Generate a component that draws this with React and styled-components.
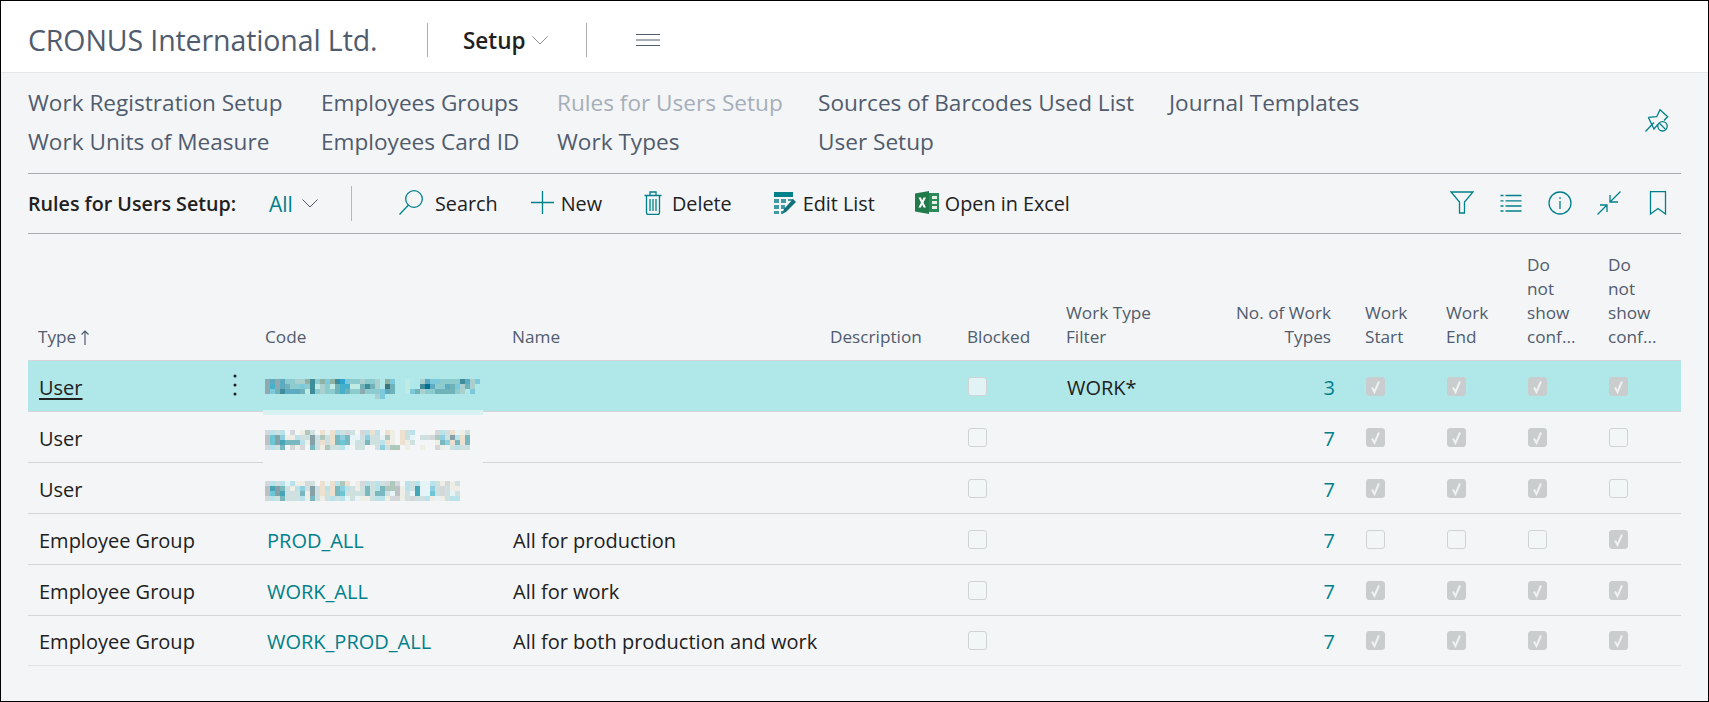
import React from 'react'
import styled, { createGlobalStyle } from 'styled-components'

const TEAL = '#00808a'
const SLATE = '#505c6d'
const INK = '#212121'

const GlobalStyle = createGlobalStyle`
  html, body {
    margin: 0;
    padding: 0;
    background: #f4f5f7;
    font-family: "Open Sans", "Noto Sans", sans-serif;
  }
  * { box-sizing: border-box; }
`

const Page = styled.div`
  width: 1709px;
  height: 702px;
  border: 1px solid #000;
  background: #f4f5f7;
  overflow: hidden;
`

const Header = styled.header`
  height: 72px;
  background: #fff;
  border-bottom: 1px solid #e6e7e9;
  display: flex;
  align-items: center;
  padding: 7px 0 0 27px;
`

const Title = styled.div`
  font-size: 28.5px;
  color: ${SLATE};
  width: 399px;
  letter-spacing: -0.1px;
`

const Divider = styled.span`
  width: 1px;
  height: 34px;
  background: #a9adb3;
`

const AreaMenu = styled.div`
  width: 158px;
  padding-left: 35px;
  display: flex;
  align-items: center;
  gap: 6px;
  font-size: 22.5px;
  font-weight: 600;
  color: ${INK};
`

const MenuIcon = styled.svg`
  margin-left: 49px;
  display: block;
`

const Body = styled.main`
  padding: 0 27px;
`

const Nav = styled.nav`
  height: 101px;
  border-bottom: 1px solid #a7aaaf;
  display: flex;
  justify-content: space-between;
  padding: 10px 12px 0 0;
`

const NavLinks = styled.div`
  display: grid;
  grid-template-columns: 293px 236px 261px 351px auto;
  grid-auto-rows: 39px;
`

const NavLink = styled.a`
  font-size: 22.6px;
  line-height: 39px;
  white-space: nowrap;
  color: ${p => (p.$muted ? '#a6aeb9' : SLATE)};
`

const PinIcon = styled.svg`
  margin-top: 26px;
  display: block;
`

const Toolbar = styled.div`
  height: 60px;
  border-bottom: 1px solid #a7aaaf;
  display: flex;
  align-items: center;
  padding-right: 11px;
`

const ListName = styled.div`
  width: 241px;
  font-size: 19.7px;
  font-weight: 600;
  color: ${INK};
  white-space: nowrap;
`

const ViewPicker = styled.div`
  width: 82px;
  display: flex;
  align-items: center;
  gap: 9px;
  font-size: 21px;
  color: ${TEAL};
`

const ToolDivider = styled.span`
  width: 1px;
  height: 35px;
  background: #b4b7bc;
`

const ToolButton = styled.button`
  margin-left: ${p => p.$before}px;
  padding: 0;
  border: 0;
  background: none;
  display: flex;
  align-items: center;
  gap: ${p => p.$gap}px;
  font: inherit;
  font-size: 19.8px;
  color: ${INK};
  white-space: nowrap;
`

const ToolIcon = styled.svg`
  display: block;
  flex: none;
  position: relative;
  top: -1px;
`

const ActionIcons = styled.div`
  margin-left: auto;
  display: flex;
  align-items: center;
  gap: 25px;
  margin-top: -2px;
`

const COLUMNS = '228px 247px 318px 137px 99px 133px 166px 81px 81px 81px 82px'

const TableHead = styled.div`
  height: 127px;
  display: grid;
  grid-template-columns: ${COLUMNS};
  align-items: end;
  padding-bottom: 11px;
  border-bottom: 1px solid #d3d5d9;
`

const HeadCell = styled.div`
  font-size: 17.2px;
  line-height: 24px;
  color: ${SLATE};
  padding: 0 ${p => (p.$right ? '25px' : '0')} 0 ${p => (p.$sorted ? '10px' : '9px')};
  text-align: ${p => (p.$right ? 'right' : 'left')};
  white-space: nowrap;
  display: ${p => (p.$sorted ? 'flex' : 'block')};
  align-items: center;
  gap: 5px;
`

const Row = styled.div`
  height: 51px;
  display: grid;
  grid-template-columns: ${COLUMNS};
  align-items: center;
  background: ${p => (p.$selected ? '#b0e7e9' : 'transparent')};
  border-bottom: 1px solid #d3d5d9;
  &:last-child {
    height: 50px;
    border-bottom-color: #e2e3e6;
  }
`

const Cell = styled.div`
  position: relative;
  height: 100%;
  display: flex;
  align-items: center;
  padding: 2px 0 0 ${p => p.$pad || 10}px;
  font-size: 20px;
  color: ${INK};
  white-space: nowrap;
`

const TypeCell = styled(Cell)`
  justify-content: space-between;
  padding-right: 19px;
`

const TypeText = styled.span`
  text-decoration: ${p => (p.$current ? 'underline' : 'none')};
  text-underline-offset: 3px;
`

const CodeLink = styled.a`
  color: ${TEAL};
`

const CodeCell = styled(Cell)`
  /* repainted strip below the blurred code in the screenshot */
  &::after {
    content: ${p => (p.$patch ? '""' : 'none')};
    position: absolute;
    left: 7px;
    bottom: ${p => (p.$patch === 'light' ? '-4px' : '-1px')};
    width: 220px;
    height: ${p => (p.$patch === 'light' ? '5px' : '2px')};
    background: ${p => (p.$patch === 'light' ? '#d8f1f3' : '#f4f5f7')};
  }
`

const Mosaic = styled.svg`
  display: block;
  margin: 4px 0 0 -2px;
`

const NumberCell = styled(Cell)`
  justify-content: flex-end;
  padding-right: 21px;
  color: ${TEAL};
`

const CheckCell = styled.div`
  height: 100%;
  display: flex;
  align-items: center;
  padding-left: 10px;
`

const Box = styled.span`
  width: 19px;
  height: 19px;
  border-radius: 3px;
  display: block;
  background: ${p => (p.$checked ? '#c9cdcd' : p.$selected ? '#e1f3f5' : '#f3f6f6')};
  border: 1px solid ${p => (p.$checked ? '#c9cdcd' : '#d0d3d4')};
  svg { display: block; }
`

const line = { fill: 'none', stroke: TEAL, strokeWidth: 1.3 }

const Chevron = ({ color }) => (
  <svg width="16" height="9" viewBox="0 0 16 9" style={{ display: 'block' }}>
    <path d="M0.5 0.5L8 8L15.5 0.5" fill="none" stroke={color} strokeWidth="1" />
  </svg>
)

const SearchIcon = () => (
  <ToolIcon width="24" height="25" viewBox="0 0 24 25" {...line}>
    <circle cx="15" cy="9" r="8.3" />
    <path d="M9.5 15L0.5 24.5" />
  </ToolIcon>
)

const PlusIcon = () => (
  <ToolIcon width="23" height="23" viewBox="0 0 23 23" {...line}>
    <path d="M11.5 0V23M0 11.5H23" />
  </ToolIcon>
)

const TrashIcon = () => (
  <ToolIcon width="18" height="24" viewBox="0 0 18 24" {...line}>
    <path d="M0.5 4.5H17.5M2.5 4.5V21.5Q2.5 23.5 4.5 23.5H13.5Q15.5 23.5 15.5 21.5V4.5M6 4.5V1H12V4.5M6 8V20M9 8V20M12 8V20" />
  </ToolIcon>
)

const EditListIcon = () => (
  <ToolIcon width="22" height="22" viewBox="0 0 22 22">
    <path d="M0 0H19V5H0Z" fill={TEAL} />
    <path d="M0 7H5V11H0ZM7 7H12V11H7ZM14 7H19V9H14ZM0 13H5V17H0ZM7 13H11V17H7ZM0 19H5V22H0ZM7 19H9V22H7Z" fill="#3f9aa2" />
    <path d="M19 7L22 10L12 20L8 22L10 17Z" fill="#14707a" />
  </ToolIcon>
)

const ExcelIcon = () => (
  <ToolIcon width="24" height="23" viewBox="0 0 24 23">
    <path d="M0 2.5L14 0V23L0 20.5Z" fill="#217a49" />
    <path d="M14 2H24V21H14Z" fill="#2c8a57" />
    <path d="M17 5H22V8H17ZM17 10H22V13H17ZM17 15H22V18H17Z" fill="#e4f1e9" />
    <path d="M3.5 6.5L6 6.5L7.2 9.5L8.5 6.5L11 6.5L8.5 11.5L11 16.5L8.5 16.5L7.2 13.5L6 16.5L3.5 16.5L6 11.5Z" fill="#fff" />
  </ToolIcon>
)

const FilterIcon = () => (
  <svg width="24" height="23" viewBox="0 0 24 23" {...line} style={{ display: 'block' }}>
    <path d="M1 1H23L14.5 11V22H9.5V11Z" />
  </svg>
)

const ListIcon = () => (
  <svg width="24" height="18" viewBox="0 0 24 18" style={{ display: 'block' }} fill="none" stroke={TEAL} strokeWidth="1.3">
    <path d="M1.5 1.5H4.5M6.5 1.5H22.5M1.5 6.8H4.5M6.5 6.8H22.5M1.5 12H4.5M6.5 12H22.5M1.5 17H4.5M6.5 17H22.5" />
  </svg>
)

const InfoIcon = () => (
  <svg width="24" height="24" viewBox="0 0 24 24" {...line} style={{ display: 'block' }}>
    <circle cx="12" cy="12" r="11" />
    <path d="M12 10V18M12 6.2V8" />
  </svg>
)

const CompressIcon = () => (
  <svg width="24" height="24" viewBox="0 0 24 24" {...line} style={{ display: 'block' }}>
    <path d="M23.5 0.5L13 11M13 4V11H21M0.5 23.5L10 14M3 14H10V21" />
  </svg>
)

const BookmarkIcon = () => (
  <svg width="24" height="24" viewBox="0 0 24 24" {...line} style={{ display: 'block' }}>
    <path d="M4.5 0.7H19.5V23L12 17.5L4.5 23Z" />
  </svg>
)

const SortArrow = () => (
  <svg width="8" height="15" viewBox="0 0 8 15" style={{ display: 'block' }} fill="none" stroke={SLATE} strokeWidth="1.2">
    <path d="M4 15V1M0.5 4.5L4 1L7.5 4.5" />
  </svg>
)

const Dots = () => (
  <svg width="4" height="22" viewBox="0 0 4 22" style={{ display: 'block', marginTop: '-4px' }} fill="#1f1f1f">
    <circle cx="2" cy="2" r="1.5" />
    <circle cx="2" cy="11" r="1.5" />
    <circle cx="2" cy="20" r="1.5" />
  </svg>
)

const Check = () => (
  <svg width="17" height="17" viewBox="0 0 17 17">
    <path d="M5 9.5L7.5 14L12 3.5" fill="none" stroke="#f0f2f2" strokeWidth="2" />
  </svg>
)

// colour of each pixel of the blurred-out codes
const PIXELS = {
  A: '#8fa9b0', B: '#44b0cc', C: '#5cabc2', D: '#8ccbce', E: '#a9d0cf', F: '#3f8d9a', G: '#2aa5cf',
  H: '#c0ebe4', I: '#7cc9dc', J: '#3f7478', K: '#006f8f', L: '#8fb3a3', M: '#6fb2b8',
  a: '#d5d8db', b: '#bdc1c6', c: '#b9e2ea', d: '#6cc6d3', e: '#47a5b8', f: '#86a0a8', g: '#efeee6',
  h: '#ede0cf', i: '#cfe0e0', j: '#7ab8bf', k: '#e6f3f7', l: '#b0c8bc', m: '#8fcfe0',
}

const BLUR = [
  [
    'ACACDDEELFDLILFGIDDEDDE.LI..H..ECIIDDDDFCEI',
    'ABACMDDIDFHEDHMBBHHMFME.JM..H..FKCDDCMIEME.',
    'AIMFCCCMHFDEDDMBMDDADDDICM..HIMEDDMMMMDE.I.',
    '......................EI...................',
  ],
  [
    'acic.a.gli.hkhciai.achc.hg.hic....acihkgi',
    'bdfmggciifilihjmjkkimiiklg.hik.iialmifchj',
    'bdfejjjcgfihihjdjkiijiichg.hgi....gjmhjhj',
    'acij.aga.jigliick.ii..imill.g..g..agkicii',
  ],
  [
    'acickcggai.hkhclh.gaciciala.cickkcigagi',
    'befjigcmifihchjmcigijicjllbgciekkmiaigg',
    'bdfeiiijgfihihjdiiiijijjikbgikekkdiaiki',
    'acijiiicgjigicickikggiccgaagiaiicgkgicc',
  ],
]

const BlurredCode = ({ rows }) => (
  <Mosaic width="215" height="20" viewBox="0 0 215 20" shapeRendering="crispEdges">
    {rows.flatMap((pixels, y) =>
      pixels.split('').map((key, x) =>
        PIXELS[key] ? <rect key={`${x}-${y}`} x={x * 5} y={y * 5} width="5" height="5" fill={PIXELS[key]} /> : null
      )
    )}
  </Mosaic>
)

const links = [
  'Work Registration Setup', 'Employees Groups', 'Rules for Users Setup', 'Sources of Barcodes Used List', 'Journal Templates',
  'Work Units of Measure', 'Employees Card ID', 'Work Types', 'User Setup',
]

const rows = [
  { type: 'User', blur: 0, filter: 'WORK*', count: 3, checks: [0, 1, 1, 1, 1], patch: 'light' },
  { type: 'User', blur: 1, count: 7, checks: [0, 1, 1, 1, 0], patch: 'bg' },
  { type: 'User', blur: 2, count: 7, checks: [0, 1, 1, 1, 0] },
  { type: 'Employee Group', code: 'PROD_ALL', name: 'All for production', count: 7, checks: [0, 0, 0, 0, 1] },
  { type: 'Employee Group', code: 'WORK_ALL', name: 'All for work', count: 7, checks: [0, 1, 1, 1, 1] },
  { type: 'Employee Group', code: 'WORK_PROD_ALL', name: 'All for both production and work', count: 7, checks: [0, 1, 1, 1, 1] },
]

const App = () => {
  return (
    <Page>
      <GlobalStyle />
      <Header>
        <Title>CRONUS International Ltd.</Title>
        <Divider />
        <AreaMenu>
          Setup <Chevron color="#8a9099" />
        </AreaMenu>
        <Divider />
        <MenuIcon width="24" height="12" viewBox="0 0 24 12" fill="none" stroke={SLATE} strokeWidth="1">
          <path d="M0 0.5H24M0 6H24M0 11.5H24" />
        </MenuIcon>
      </Header>

      <Body>
        <Nav>
          <NavLinks>
            {links.map(label => (
              <NavLink key={label} $muted={label === 'Rules for Users Setup'}>{label}</NavLink>
            ))}
          </NavLinks>
          <PinIcon width="24" height="23" viewBox="0 0 24 23" {...line}>
            <path d="M0.5 22.5L9 13.5M3.3 8.3L11.7 7.7L15 0.7L22.7 7.7L19 11.5M13 15.2L9 20L3.3 8.3" />
            <circle cx="17.5" cy="17.3" r="4.7" />
            <path d="M14.2 14L20.8 20.6" />
          </PinIcon>
        </Nav>

        <Toolbar>
          <ListName>Rules for Users Setup:</ListName>
          <ViewPicker>
            All <Chevron color={SLATE} />
          </ViewPicker>
          <ToolDivider />
          <ToolButton $before={47} $gap={12}><SearchIcon />Search</ToolButton>
          <ToolButton $before={33} $gap={7}><PlusIcon />New</ToolButton>
          <ToolButton $before={42} $gap={10}><TrashIcon />Delete</ToolButton>
          <ToolButton $before={42} $gap={7}><EditListIcon />Edit List</ToolButton>
          <ToolButton $before={40} $gap={6}><ExcelIcon />Open in Excel</ToolButton>
          <ActionIcons>
            <FilterIcon />
            <ListIcon />
            <InfoIcon />
            <CompressIcon />
            <BookmarkIcon />
          </ActionIcons>
        </Toolbar>

        <TableHead>
          <HeadCell $sorted>Type <SortArrow /></HeadCell>
          <HeadCell>Code</HeadCell>
          <HeadCell>Name</HeadCell>
          <HeadCell>Description</HeadCell>
          <HeadCell>Blocked</HeadCell>
          <HeadCell>Work Type<br />Filter</HeadCell>
          <HeadCell $right>No. of Work<br />Types</HeadCell>
          <HeadCell>Work<br />Start</HeadCell>
          <HeadCell>Work<br />End</HeadCell>
          <HeadCell>Do<br />not<br />show<br />conf...</HeadCell>
          <HeadCell>Do<br />not<br />show<br />conf...</HeadCell>
        </TableHead>

        {rows.map((row, i) => (
          <Row key={i} $selected={i === 0}>
            <TypeCell $pad={11}>
              <TypeText $current={i === 0}>{row.type}</TypeText>
              {i === 0 && <Dots />}
            </TypeCell>
            <CodeCell $pad={11} $patch={row.patch}>
              {row.code ? <CodeLink>{row.code}</CodeLink> : <BlurredCode rows={BLUR[row.blur]} />}
            </CodeCell>
            <Cell>{row.name}</Cell>
            <Cell />
            <CheckCell>
              <Box $selected={i === 0} $checked={row.checks[0] === 1}>{row.checks[0] === 1 && <Check />}</Box>
            </CheckCell>
            <Cell>{row.filter}</Cell>
            <NumberCell>{row.count}</NumberCell>
            {row.checks.slice(1).map((on, c) => (
              <CheckCell key={c}>
                <Box $selected={i === 0} $checked={on === 1}>{on === 1 && <Check />}</Box>
              </CheckCell>
            ))}
          </Row>
        ))}
      </Body>
    </Page>
  )
}

export default App
